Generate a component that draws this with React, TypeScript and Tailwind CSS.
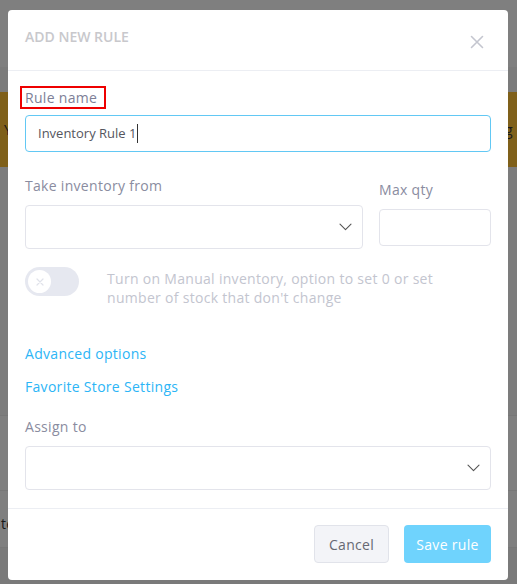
import React from "react";

function Chevron() {
  return (
    <svg width="13" height="8" viewBox="0 0 13 8" fill="none">
      <path d="M1 1.2l5.5 5.5 5.5-5.5" stroke="#555" strokeWidth="1.1" strokeLinecap="round" strokeLinejoin="round" />
    </svg>
  );
}

export default function App() {
  return (
    <div className="relative w-[517px] h-[584px] overflow-hidden bg-white tracking-[0.3px]" style={{ fontFamily: '"Open Sans", "Liberation Sans", sans-serif' }}>
      {/* background page */}
      <div className="flex flex-col">
        <div className="h-[67px] bg-white" />
        <div className="h-[25px] bg-[#f6f6f6]" />
        <div className="h-[75px] bg-[#ffc035] flex items-center justify-between text-[14px] text-[#333] px-[4px]">
          <span>Y</span>
          <span>og</span>
        </div>
        <div className="h-[248px] bg-[#f8f8f8]" />
        <div className="h-[75px] bg-white border-t border-[#eeeeee]" />
        <div className="h-[57px] bg-white border-t border-[#eeeeee] flex items-center pt-[8px] text-[14px] text-[#333]">
          <span className="ml-[1px]">te</span>
        </div>
        <div className="h-[40px] bg-[#f4f4f4] border-t border-[#eeeeee]" />
      </div>

      {/* overlay */}
      <div className="absolute inset-0 bg-black/50 pl-[8px] pt-[10px]">
        <div className="w-[500px] h-[570px] bg-white rounded-[4px] flex flex-col">
          {/* header */}
          <div className="h-[61px] border-b border-[#eceef3] flex items-start justify-between px-[17px] pt-[16px]">
            <span className="text-[14px] leading-[21px] font-semibold text-[#c8c8cc] tracking-[0px]">ADD NEW RULE</span>
            <svg width="14" height="14" viewBox="0 0 14 14" className="mt-[9px] mr-[7px]">
              <path d="M1.5 1.5l11 11M12.5 1.5l-11 11" stroke="#c4c6cf" strokeWidth="1.6" strokeLinecap="round" />
            </svg>
          </div>

          {/* body */}
          <div className="flex-1 px-[17px] pt-[15px] flex flex-col">
            <div className="self-start -ml-[5px] h-[23px] pl-[3px] pr-[7px] border-2 border-[#ee0000] flex items-center">
              <span className="text-[14px] text-[#7d8097]">Rule name</span>
            </div>
            <div className="mt-[6px] h-[37px] rounded-[4px] border border-[#62c8f4] flex items-center pl-[12px]">
              <span className="text-[13px] tracking-[0px] text-[#55565e]">Inventory Rule 1</span>
              <span className="w-px h-[19px] bg-[#333] ml-[1px]" />
            </div>

            <div className="mt-[24px] flex gap-[16px]">
              <div className="flex-1 flex flex-col">
                <span className="text-[14px] text-[#8a8ca0] leading-[20px]">Take inventory from</span>
                <div className="mt-[9px] h-[44px] rounded-[4px] border border-[#e3e4eb] flex items-center justify-end pr-[10px]">
                  <Chevron />
                </div>
              </div>
              <div className="w-[112px] flex flex-col">
                <span className="text-[14px] text-[#8a8ca0] leading-[20px] mt-[4px]">Max qty</span>
                <div className="mt-[9px] h-[37px] rounded-[4px] border border-[#e3e4eb]" />
              </div>
            </div>

            <div className="mt-[18px] flex items-start">
              <div className="w-[54px] h-[29px] rounded-full bg-[#e6e8f0] p-[3px] shrink-0">
                <div className="w-[23px] h-[23px] rounded-full bg-white flex items-center justify-center">
                  <svg width="8" height="8" viewBox="0 0 8 8">
                    <path d="M1 1l6 6M7 1l-6 6" stroke="#e0e2ea" strokeWidth="1.2" strokeLinecap="round" />
                  </svg>
                </div>
              </div>
              <p className="ml-[28px] text-[14px] leading-[19px] text-[#c3c5cf] w-[345px] mt-[2px]">
                Turn on Manual inventory, option to set 0 or set number of stock that don't change
              </p>
            </div>

            <span className="mt-[37px] text-[14px] leading-[20px] text-[#2cb5f6]">Advanced options</span>
            <span className="mt-[13px] text-[14px] leading-[20px] text-[#2cb5f6]">Favorite Store Settings</span>

            <span className="mt-[20px] text-[14px] leading-[20px] text-[#8a8ca0]">Assign to</span>
            <div className="mt-[9px] h-[44px] rounded-[4px] border border-[#e3e4eb] flex items-center justify-end pr-[10px]">
              <Chevron />
            </div>
          </div>

          {/* footer */}
          <div className="h-[72px] border-t border-[#eceef3] flex items-start justify-end gap-[15px] px-[17px] pt-[16px]">
            <button className="w-[75px] h-[38px] rounded-[4px] bg-[#f3f4f8] border border-[#e1e3ea] text-[14px] text-[#666873]">Cancel</button>
            <button className="w-[87px] h-[38px] rounded-[4px] bg-[#6fd3fd] text-[14px] font-medium text-white">Save rule</button>
          </div>
        </div>
      </div>
    </div>
  );
}
